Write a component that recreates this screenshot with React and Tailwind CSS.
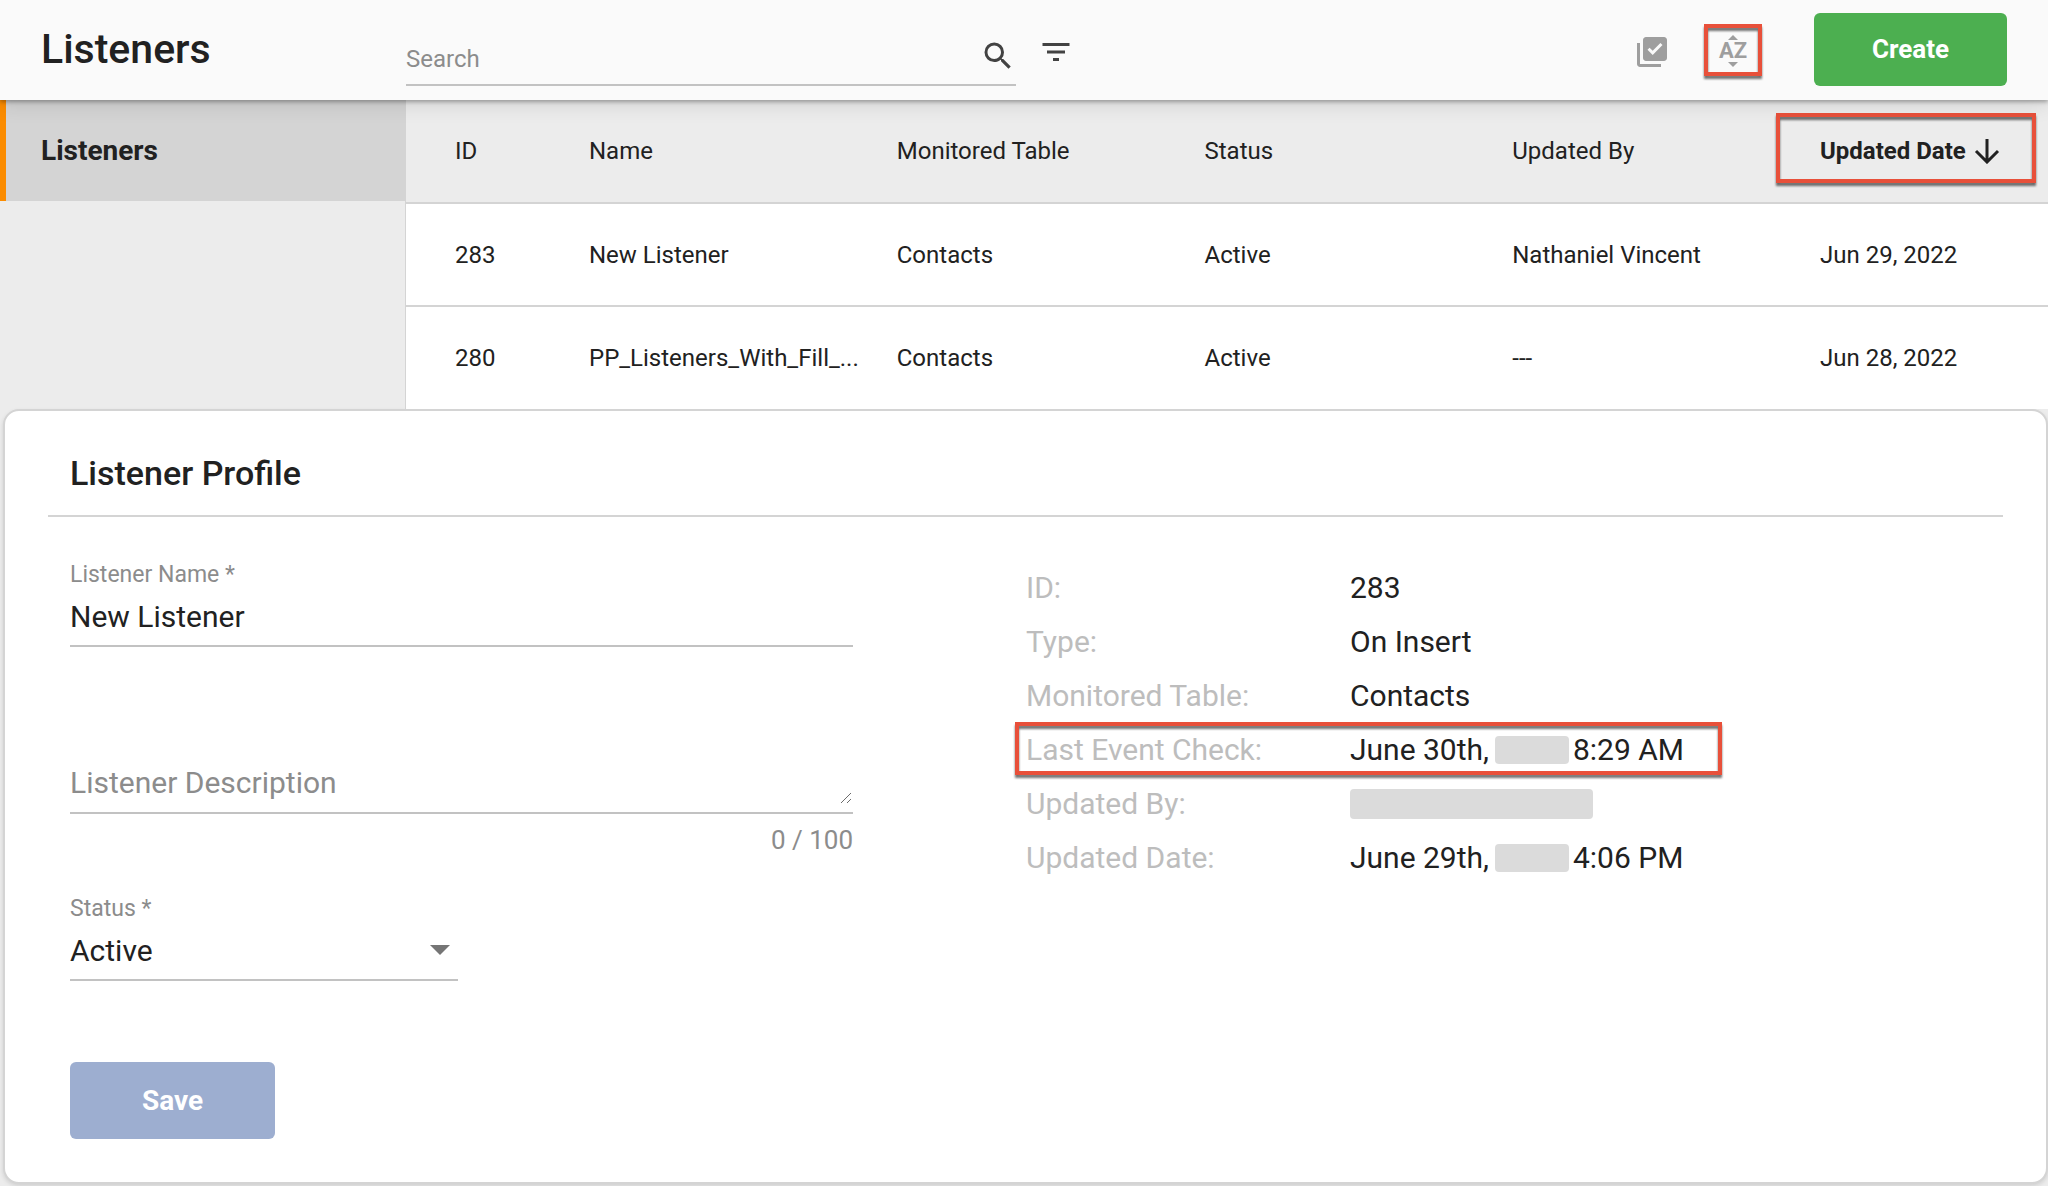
import { MdSearch, MdFilterList, MdLibraryAddCheck } from "react-icons/md";

const rows = [
  { id: "283", name: "New Listener", table: "Contacts", status: "Active", by: "Nathaniel Vincent", date: "Jun 29, 2022" },
  { id: "280", name: "PP_Listeners_With_Fill_...", table: "Contacts", status: "Active", by: "---", date: "Jun 28, 2022" },
];

function Highlight({ className }) {
  return (
    <span
      aria-hidden="true"
      className={`pointer-events-none absolute border-4 border-[#e8503a] drop-shadow-[0_3px_1px_rgba(0,0,0,0.55)] ${className}`}
    />
  );
}

function Redacted({ className }) {
  return <span className={`inline-block rounded bg-[#dbdbdb] ${className}`} />;
}

function Detail({ label, highlighted, children }) {
  return (
    <div className="relative flex h-[54px] items-center">
      {highlighted && <Highlight className="-left-[11px] -right-[38px] -top-px bottom-0.5" />}
      <dt className="w-[324px] shrink-0 text-[#bdbdbd]">{label}</dt>
      <dd className="flex items-center whitespace-nowrap">{children}</dd>
    </div>
  );
}

function Header() {
  return (
    <header className="relative z-10 flex h-[100px] items-center bg-[#fafafa] pr-[41px] shadow-[0_2px_4px_rgba(0,0,0,0.3),0_4px_20px_rgba(0,0,0,0.12)]">
      <h1 className="w-[406px] shrink-0 pb-0.5 pl-[41px] text-[41px] leading-[48px] font-medium">Listeners</h1>
      <label className="flex h-[72px] w-[610px] items-center border-b-2 border-[#c2c2c2]">
        <input
          type="search"
          aria-label="Search"
          placeholder="Search"
          className="h-full min-w-0 flex-1 bg-transparent pt-5 text-2xl outline-none placeholder:text-[#8c8c8c]"
        />
        <MdSearch className="mt-3.5 size-9 text-[#424242]" />
      </label>
      <button type="button" aria-label="Filter" className="mt-1 ml-[22px]">
        <MdFilterList className="size-9 text-[#424242]" />
      </button>
      <div className="ml-auto flex items-center pb-px">
        <button type="button" aria-label="Select multiple" className="mt-1">
          <MdLibraryAddCheck className="size-9 text-[#9e9e9e]" />
        </button>
        <button
          type="button"
          aria-label="Sort"
          className="relative ml-[34px] flex h-[52px] w-[58px] flex-col items-center justify-center pt-0.5 text-[#9e9e9e]"
        >
          <svg viewBox="0 0 10 5" className="h-[5px] w-[10px]" fill="currentColor"><path d="M5 0l5 5H0z" /></svg>
          <span className="text-[22px] leading-[22px] font-bold">AZ</span>
          <svg viewBox="0 0 10 5" className="h-[5px] w-[10px]" fill="currentColor"><path d="M0 0h10L5 5z" /></svg>
          <Highlight className="inset-0" />
        </button>
        <button type="button" className="ml-[52px] h-[73px] w-[193px] rounded-md bg-[#4caf50] text-[26px] font-bold text-white">
          Create
        </button>
      </div>
    </header>
  );
}

function ListenerTable() {
  return (
    <table className="w-full table-fixed border-collapse text-left text-2xl">
      <colgroup>
        <col className="w-[183px]" />
        <col />
        <col />
        <col />
        <col />
        <col className="w-[228px]" />
      </colgroup>
      <thead>
        <tr className="h-[103px] border-b-2 border-[#d4d4d4] bg-[#ececec]">
          <th scope="col" className="pl-[49px] font-normal">ID</th>
          <th scope="col" className="font-normal">Name</th>
          <th scope="col" className="font-normal">Monitored Table</th>
          <th scope="col" className="font-normal">Status</th>
          <th scope="col" className="font-normal">Updated By</th>
          <th scope="col" aria-sort="descending" className="font-bold">
            <button type="button" className="relative flex items-center gap-2 whitespace-nowrap">
              Updated Date
              <svg viewBox="0 0 26 26" className="size-[26px]" fill="none" stroke="currentColor" strokeWidth="3">
                <path d="M13 1v23M2 13l11 11 11-11" />
              </svg>
              <Highlight className="-left-11 -right-9 -top-[22px] -bottom-4" />
            </button>
          </th>
        </tr>
      </thead>
      <tbody>
        {rows.map((r) => (
          <tr key={r.id} className="h-[103px] border-b-2 border-[#d4d4d4] bg-white last:border-b-0">
            <td className="pl-[49px]">{r.id}</td>
            <td className="truncate pr-6">{r.name}</td>
            <td>{r.table}</td>
            <td>{r.status}</td>
            <td>{r.by}</td>
            <td>{r.date}</td>
          </tr>
        ))}
      </tbody>
    </table>
  );
}

function ProfileForm() {
  return (
    <form className="w-[783px] shrink-0 pt-[42px]" onSubmit={(e) => e.preventDefault()}>
      <div className="border-b-2 border-[#c2c2c2]">
        <label htmlFor="name" className="block text-[23px] leading-8 text-[#8c8c8c]">Listener Name *</label>
        <input id="name" defaultValue="New Listener" className="block h-[54px] w-full pb-1 text-[30px] outline-none" />
      </div>
      <div className="relative mt-[108px] border-b-2 border-[#c2c2c2] pb-2">
        <textarea
          aria-label="Listener Description"
          placeholder="Listener Description"
          rows={1}
          maxLength={100}
          className="block h-[49px] w-full resize-none pt-2 text-[30px] leading-10 outline-none placeholder:text-[#8c8c8c]"
        />
        <svg viewBox="0 0 12 12" className="pointer-events-none absolute right-px bottom-2 size-3" fill="none" stroke="#6b6b6b">
          <path d="M1 11L11 1M7 11l4-4" />
        </svg>
      </div>
      <p className="mt-2 text-right text-[26px] leading-9 text-[#8c8c8c]">0 / 100</p>
      <div className="relative mt-[35px] w-[388px] border-b-2 border-[#c2c2c2]">
        <label htmlFor="status" className="block text-[23px] leading-8 text-[#8c8c8c]">Status *</label>
        <select id="status" defaultValue="Active" className="block h-[54px] w-full appearance-none bg-transparent pb-1 text-[30px] outline-none">
          <option>Active</option>
          <option>Inactive</option>
        </select>
        <svg viewBox="0 0 20 10" className="pointer-events-none absolute right-2 bottom-6 h-[10px] w-5" fill="#757575">
          <path d="M0 0h20L10 10z" />
        </svg>
      </div>
      <button type="submit" className="mt-[81px] h-[77px] w-[205px] rounded-md bg-[#9daed0] text-[28px] font-bold text-white">
        Save
      </button>
    </form>
  );
}

export default function App() {
  return (
    <div className="min-h-screen bg-[#ececec] font-['Roboto',sans-serif] text-[#212121]">
      <Header />
      <div className="flex">
        <nav className="w-[405px] shrink-0">
          <a
            href="#listeners"
            aria-current="page"
            className="flex h-[101px] items-center border-l-[6px] border-[#fb8c00] bg-[#d4d4d4] pl-[35px] text-[28px] font-bold"
          >
            Listeners
          </a>
        </nav>
        <div className="min-w-0 flex-1 border-l border-[#d4d4d4]">
          <ListenerTable />
        </div>
      </div>
      <section className="ml-[3px] rounded-2xl border-2 border-[#d4d4d4] bg-white px-[43px] pt-[42px] pb-[43px] shadow-[0_2px_4px_rgba(0,0,0,0.12)]">
        <h2 className="border-b-2 border-[#d4d4d4] px-[22px] pb-[22px] text-[34px] leading-10 font-medium">Listener Profile</h2>
        <div className="flex px-[22px]">
          <ProfileForm />
          <dl className="ml-[173px] pt-11 text-[30px] leading-10">
            <Detail label="ID:">283</Detail>
            <Detail label="Type:">On Insert</Detail>
            <Detail label="Monitored Table:">Contacts</Detail>
            <Detail label="Last Event Check:" highlighted>
              June 30th,<Redacted className="mr-1 ml-1.5 h-7 w-[74px]" />8:29 AM
            </Detail>
            <Detail label="Updated By:">
              <Redacted className="h-[30px] w-[243px]" />
            </Detail>
            <Detail label="Updated Date:">
              June 29th,<Redacted className="mr-1 ml-1.5 h-7 w-[74px]" />4:06 PM
            </Detail>
          </dl>
        </div>
      </section>
    </div>
  );
}
